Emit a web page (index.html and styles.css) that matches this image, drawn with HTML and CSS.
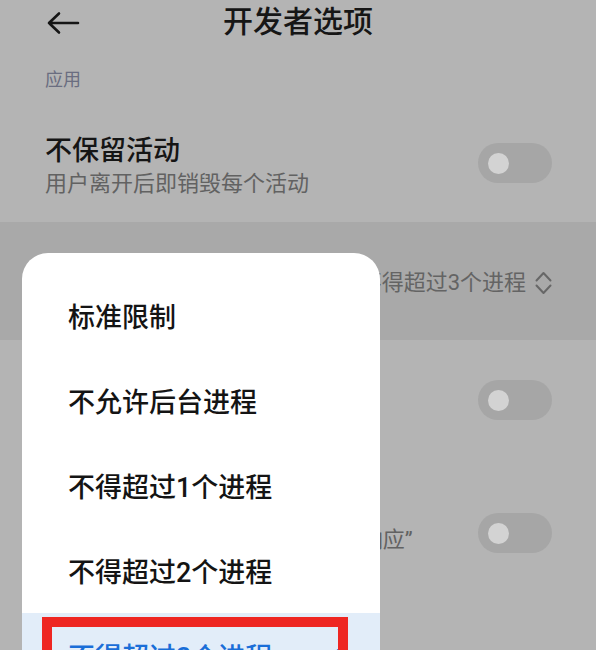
FILE: index.html
```html
<!DOCTYPE html>
<html lang="zh-CN">
<head>
<meta charset="utf-8">
<title>开发者选项</title>
<link rel="stylesheet" href="styles.css">
</head>
<body>
<div class="screen">
  <header class="topbar">
    <svg class="back" width="34" height="24" viewBox="0 0 34 24" aria-hidden="true">
      <path d="M3 12 H32 M13 2.5 L3 12 L13 21.5" fill="none" stroke="#161616" stroke-width="2.6" stroke-linecap="round" stroke-linejoin="round"/>
    </svg>
    <h1 class="title">开发者选项</h1>
  </header>

  <div class="section-label">应用</div>

  <div class="row row-first">
    <div class="row-text">
      <div class="row-title">不保留活动</div>
      <div class="row-sub">用户离开后即销毁每个活动</div>
    </div>
    <span class="switch switch-first"><span class="knob"></span></span>
  </div>

  <div class="row row-pressed">
    <div class="row-title">后台进程限制</div>
    <div class="row-value">
      <span>不得超过3个进程</span>
      <svg class="chevron" width="17" height="26" viewBox="0 0 17 26" aria-hidden="true">
        <path d="M1.5 10.5 L8.5 3 L15.5 10.5 M1.5 15.5 L8.5 23 L15.5 15.5" fill="none" stroke="#676767" stroke-width="2" stroke-linecap="round" stroke-linejoin="round"/>
      </svg>
    </div>
  </div>

  <div class="row row-single">
    <div class="row-title">显示通知渠道警告</div>
    <span class="switch"><span class="knob"></span></span>
  </div>

  <div class="row row-anr">
    <div class="row-text">
      <div class="row-title">显示所有应用无响应</div>
      <div class="row-sub">为所有后台应用显示“应用程序无响应”</div>
    </div>
    <span class="switch switch-anr"><span class="knob"></span></span>
  </div>

  <div class="menu">
    <div class="menu-item">标准限制</div>
    <div class="menu-item">不允许后台进程</div>
    <div class="menu-item">不得超过1个进程</div>
    <div class="menu-item">不得超过2个进程</div>
    <div class="menu-item menu-item-selected">
      <span>不得超过3个进程</span>
      <svg class="check" width="20" height="16" viewBox="0 0 20 16" aria-hidden="true">
        <path d="M2 8.5 L7.5 13.5 L18 2.5" fill="none" stroke="#1a6ed8" stroke-width="2.6" stroke-linecap="round" stroke-linejoin="round"/>
      </svg>
      <span class="mark"></span>
    </div>
  </div>
</div>
</body>
</html>
```

FILE: styles.css
```css
html, body {
  margin: 0;
  padding: 0;
  overflow: hidden;
}

body {
  font-family: Roboto, "Noto Sans CJK SC", sans-serif;
  background: #b4b4b4;
  color: #151515;
}

.screen {
  position: relative;
  width: 596px;
  height: 650px;
  overflow: hidden;
  background: #b4b4b4;
}

.topbar {
  height: 44px;
  display: grid;
  grid-template-columns: 1fr auto 1fr;
  align-items: center;
}

.back {
  justify-self: start;
  margin-left: 46px;
  margin-top: 2px;
}

.title {
  margin: 0;
  font-size: 30px;
  line-height: 44px;
  font-weight: 500;
  color: #161616;
}

.section-label {
  margin-top: 22px;
  padding-left: 45px;
  font-size: 18px;
  line-height: 28px;
  color: #6a6d80;
}

.row {
  display: flex;
  align-items: center;
  justify-content: space-between;
  padding: 0 44px 0 45px;
}

.row-text {
  display: flex;
  flex-direction: column;
}

.row-title {
  font-size: 27px;
  line-height: 34px;
  font-weight: 500;
  color: #151515;
  white-space: nowrap;
}

.row-sub {
  font-size: 22px;
  line-height: 32px;
  color: #626262;
  white-space: nowrap;
}

.row-first {
  padding-top: 40px;
  padding-bottom: 22px;
}

.row-pressed {
  height: 118px;
  box-sizing: border-box;
  padding-top: 4px;
  background: #a9a9a9;
}

.row-value {
  display: flex;
  align-items: center;
  gap: 9px;
  font-size: 22px;
  line-height: 30px;
  color: #646464;
}

.row-single {
  height: 120px;
}

.row-anr {
  padding-top: 30px;
}

.switch {
  flex: none;
  width: 74px;
  height: 40px;
  border-radius: 20px;
  background: #a6a6a6;
  display: flex;
  align-items: center;
  padding-left: 10px;
  box-sizing: border-box;
}

.switch-first {
  margin-bottom: 8px;
}

.switch-anr {
  margin-top: 20px;
}

.knob {
  width: 21px;
  height: 21px;
  border-radius: 50%;
  background: #d3d3d3;
}

.menu {
  position: absolute;
  left: 22px;
  top: 253px;
  width: 358px;
  height: 470px;
  box-sizing: border-box;
  padding-top: 20px;
  background: #ffffff;
  border-radius: 26px;
  overflow: hidden;
}

.menu-item {
  height: 85px;
  display: flex;
  align-items: center;
  padding-left: 46px;
  font-size: 27px;
  font-weight: 500;
  color: #141414;
}

.menu-item-selected {
  position: relative;
  justify-content: space-between;
  padding-right: 40px;
  background: #e2edf9;
  color: #1a6ed8;
}

.mark {
  position: absolute;
  left: 20px;
  top: 4px;
  width: 306px;
  height: 110px;
  box-sizing: border-box;
  border: 10px solid #ee2622;
}
```
